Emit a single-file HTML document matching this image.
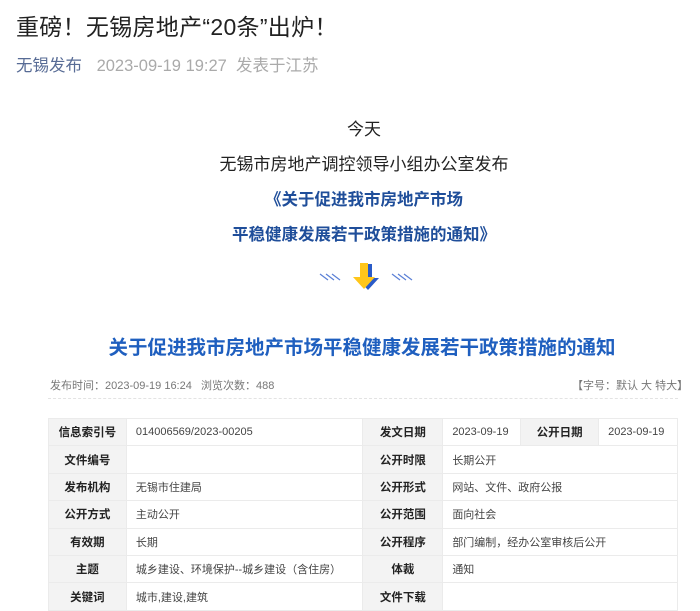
<!DOCTYPE html>
<html><head><meta charset="utf-8"><style>
*{margin:0;padding:0;box-sizing:border-box}
body{width:700px;height:610px;overflow:hidden;background:#fff;font-family:"Liberation Sans","Noto Sans CJK SC",sans-serif;color:#222;position:relative}
.a{position:absolute;white-space:nowrap}
h1{position:absolute;left:16px;top:8px;font-size:23px;font-weight:normal;color:#222;letter-spacing:0.3px}
.meta{left:16px;top:52px;font-size:16.5px;color:#aaa}
.meta b{font-weight:normal;color:#576b95;margin-right:10px}
.c{left:26px;width:676px;text-align:center;font-size:17px}
.blue{color:#1f4e9a;font-weight:bold;font-size:16.5px}
.t{left:24px;width:676px;text-align:center;top:331px;font-size:19.5px;font-weight:bold;color:#1f5fbf}
.sm{font-size:11px;color:#777}
table{position:absolute;left:48px;top:418px;width:630px;border-collapse:collapse;font-size:11px;color:#444}
td{height:27.4px;border:1px solid #ebebeb;padding:0 9px}
td.l{background:#f3f3f3;font-weight:bold;text-align:center;color:#222;font-size:11.5px}
</style></head><body>
<h1>重磅！无锡房地产“20条”出炉！</h1>
<div class="a meta"><b>无锡发布</b> 2023-09-19 19:27 &nbsp;发表于江苏</div>
<div class="a c" style="top:115px">今天</div>
<div class="a c" style="top:150px">无锡市房地产调控领导小组办公室发布</div>
<div class="a c blue" style="top:186px;left:26px">《关于促进我市房地产市场</div>
<div class="a c blue" style="top:221px;left:26px">平稳健康发展若干政策措施的通知》</div>
<svg class="a" style="left:316px;top:258px" width="100" height="40">
<g stroke="#5a7fd6" stroke-width="1.2"><line x1="4" y1="16" x2="12" y2="22"/><line x1="10" y1="16" x2="18" y2="22"/><line x1="16" y1="16" x2="24" y2="22"/><line x1="76" y1="16" x2="84" y2="22"/><line x1="82" y1="16" x2="90" y2="22"/><line x1="88" y1="16" x2="96" y2="22"/></g>
<path d="M46 5h8v14h7l-11 12-11-12h7z" fill="#2a5bc8" transform="translate(2,1)"/>
<path d="M44 5h8v14h7l-11 12-11-12h7z" fill="#ffc61a"/>
</svg>
<div class="a t">关于促进我市房地产市场平稳健康发展若干政策措施的通知</div>
<div class="a sm" style="left:50px;top:377px">发布时间：2023-09-19 16:24 &nbsp;&nbsp;浏览次数：488</div>
<div class="a sm" style="left:572px;top:377px">【字号：默认 大 特大】</div>
<div class="a" style="left:48px;top:398px;width:630px;border-top:1px dashed #e3e3e3"></div>
<table>
<colgroup><col style="width:78px"><col style="width:237px"><col style="width:80px"><col style="width:78px"><col style="width:78px"><col style="width:79px"></colgroup>
<tr><td class="l">信息索引号</td><td>014006569/2023-00205</td><td class="l">发文日期</td><td>2023-09-19</td><td class="l">公开日期</td><td>2023-09-19</td></tr>
<tr><td class="l">文件编号</td><td></td><td class="l">公开时限</td><td colspan="3">长期公开</td></tr>
<tr><td class="l">发布机构</td><td>无锡市住建局</td><td class="l">公开形式</td><td colspan="3">网站、文件、政府公报</td></tr>
<tr><td class="l">公开方式</td><td>主动公开</td><td class="l">公开范围</td><td colspan="3">面向社会</td></tr>
<tr><td class="l">有效期</td><td>长期</td><td class="l">公开程序</td><td colspan="3">部门编制，经办公室审核后公开</td></tr>
<tr><td class="l">主题</td><td>城乡建设、环境保护--城乡建设（含住房）</td><td class="l">体裁</td><td colspan="3">通知</td></tr>
<tr><td class="l">关键词</td><td>城市,建设,建筑</td><td class="l">文件下载</td><td colspan="3"></td></tr>
</table>
</body></html>
